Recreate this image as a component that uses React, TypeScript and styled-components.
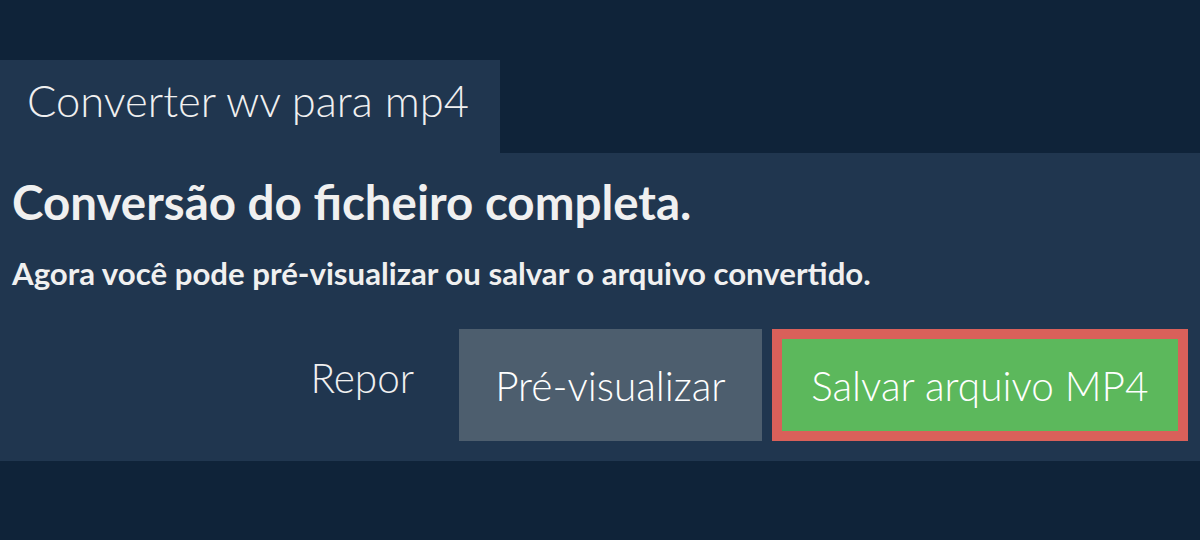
import React from 'react'
import { createGlobalStyle, styled } from 'styled-components'

const GlobalStyle = createGlobalStyle`
  html, body {
    margin: 0;
    padding: 0;
    background: #0f2339;
    font-family: Lato, 'Open Sans', sans-serif;
    color: #f0f0f0;
  }
`

const Page = styled.div`
  width: 1200px;
  height: 540px;
  padding-top: 60px;
  box-sizing: border-box;
  background: #0f2339;
`

const Tab = styled.div`
  width: 500px;
  height: 93px;
  box-sizing: border-box;
  padding-left: 27px;
  background: #20364f;
  font-size: 43.5px;
  font-weight: 300;
  line-height: 81px;
  white-space: nowrap;
`

const Panel = styled.section`
  background: #20364f;
  padding: 20px 12px 20px;
  display: flex;
  flex-direction: column;
`

const Title = styled.h1`
  margin: 0;
  font-size: 47.5px;
  font-weight: 700;
  line-height: 58px;
  white-space: nowrap;
`

const Subtitle = styled.p`
  margin: 23px 0 0;
  font-size: 31.2px;
  font-weight: 700;
  line-height: 38px;
  white-space: nowrap;
`

const Actions = styled.div`
  display: flex;
  justify-content: flex-end;
  align-items: center;
  gap: 10px;
  margin-top: 37px;
`

const LinkButton = styled.button`
  background: none;
  border: 0;
  color: #f0f0f0;
  font-family: inherit;
  font-size: 40.5px;
  font-weight: 300;
  padding: 0 35px 16px 0;
  cursor: pointer;
`

const Button = styled.button<{ $variant: 'grey' | 'green' }>`
  height: 112px;
  box-sizing: border-box;
  padding: 0 ${p => (p.$variant === 'green' ? 29.5 : 36)}px;
  font-family: inherit;
  font-size: 40.5px;
  font-weight: 300;
  color: #ffffff;
  cursor: pointer;
  background: ${p => (p.$variant === 'green' ? '#5cb85c' : '#4d5e6e')};
  border: ${p => (p.$variant === 'green' ? '10px solid #d9605a' : '0')};
`

export default function App() {
  return (
    <>
      <GlobalStyle />
      <Page>
        <Tab>Converter wv para mp4</Tab>
        <Panel>
          <Title>Conversão do ficheiro completa.</Title>
          <Subtitle>Agora você pode pré-visualizar ou salvar o arquivo convertido.</Subtitle>
          <Actions>
            <LinkButton>Repor</LinkButton>
            <Button $variant='grey'>Pré-visualizar</Button>
            <Button $variant='green'>Salvar arquivo MP4</Button>
          </Actions>
        </Panel>
      </Page>
    </>
  )
}
